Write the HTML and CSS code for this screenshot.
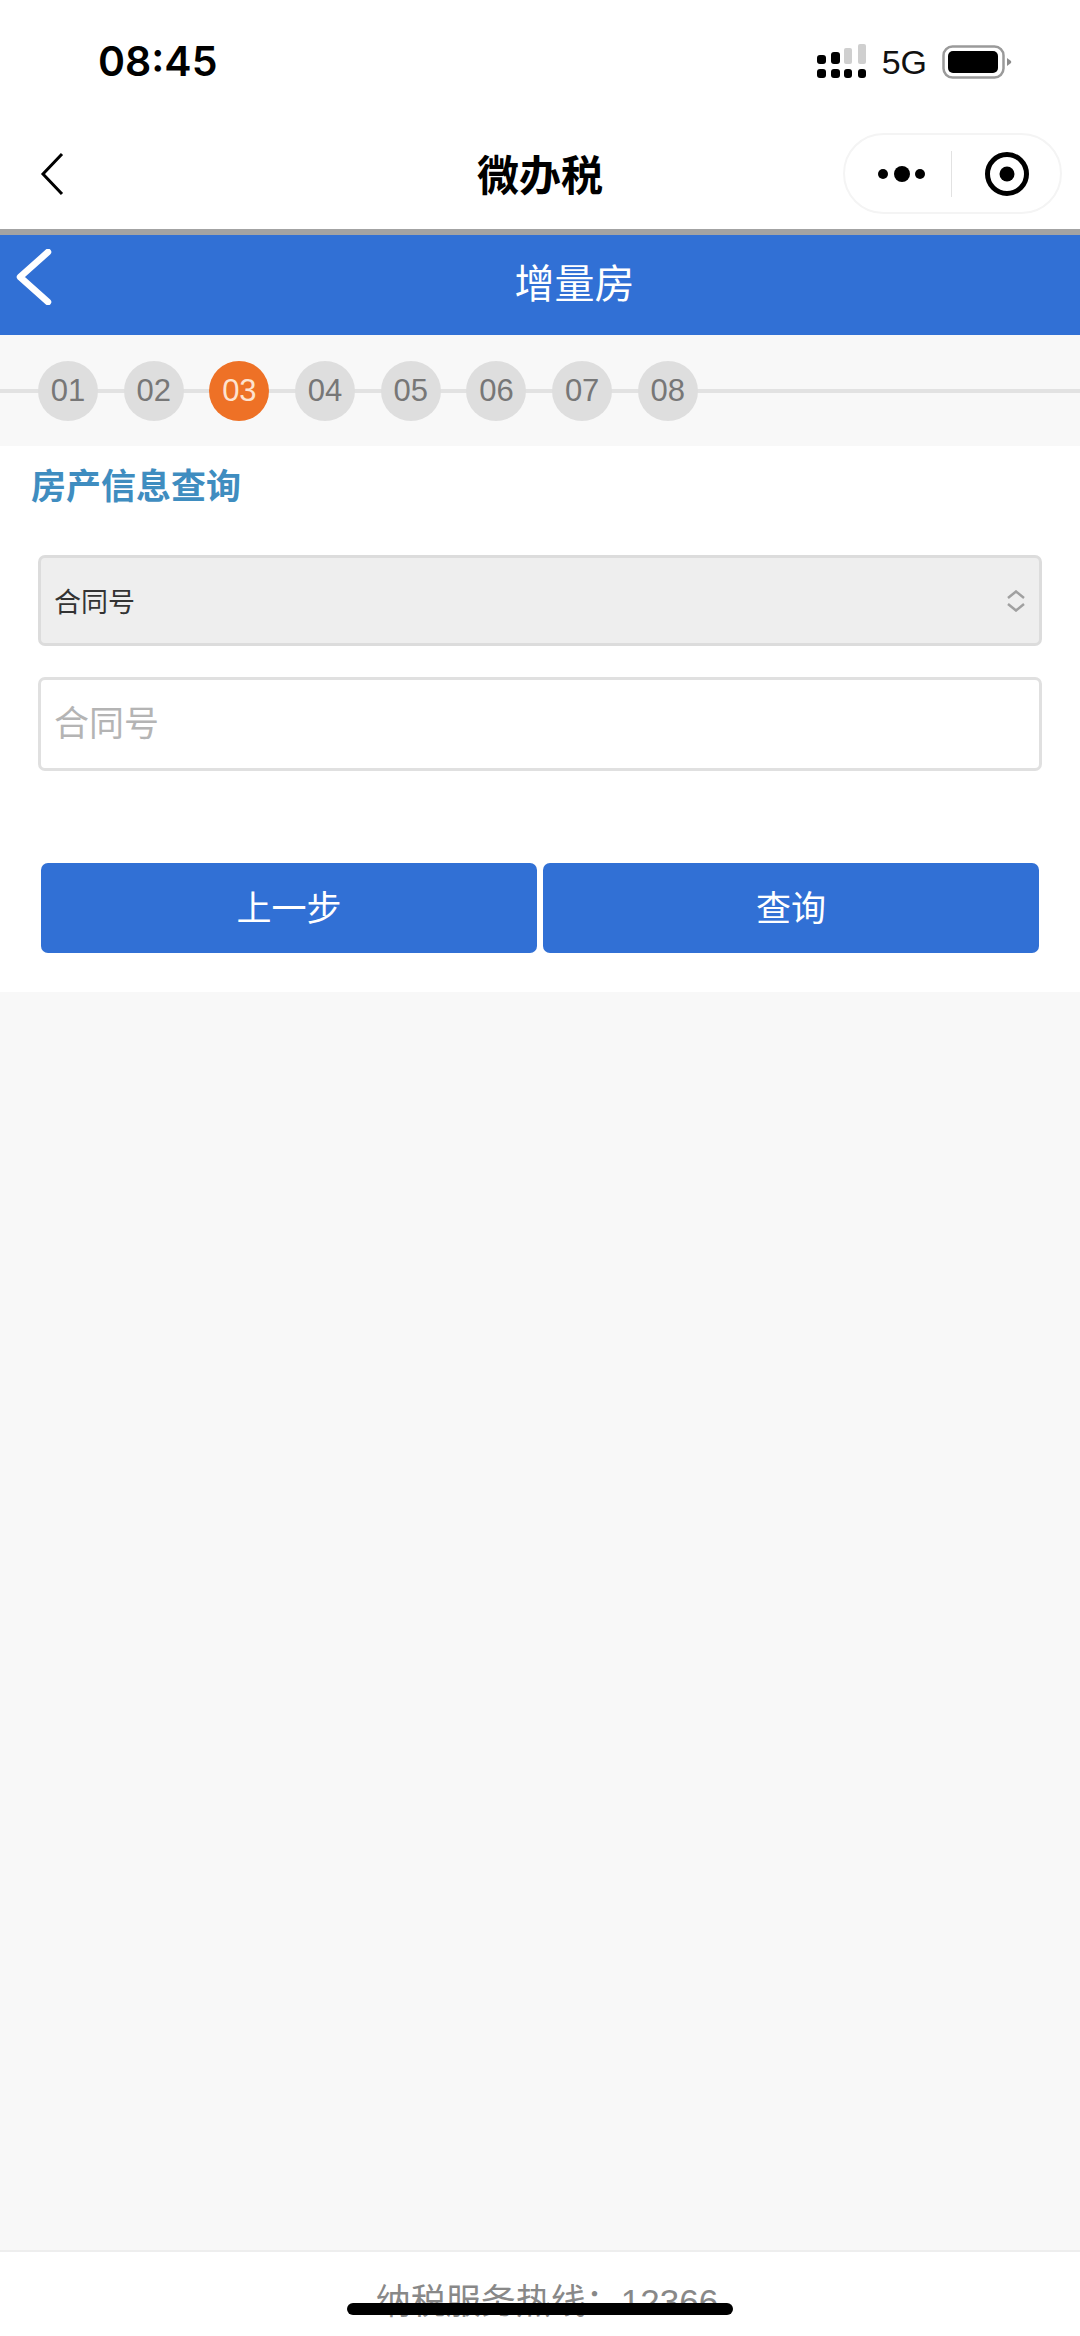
FILE: index.html
```html
<!DOCTYPE html>
<html lang="zh-CN">
<head>
    <meta charset="UTF-8">
    <meta name="viewport" content="width=device-width, initial-scale=1.0">
    <title>微办税</title>
    <link rel="stylesheet" href="styles.css">
</head>
<body>
    <div class="status-bar">
        <span class="time">08:45</span>
        <div class="status-icons">
            <svg class="signal" width="50" height="34" viewBox="0 0 50 34">
                <rect x="0" y="11" width="9" height="9" rx="3" fill="#000"/>
                <rect x="14" y="8" width="9" height="12" rx="3" fill="#000"/>
                <rect x="27" y="4" width="8" height="16" rx="2" fill="#cfcfcf"/>
                <rect x="41" y="0" width="8" height="20" rx="2" fill="#cfcfcf"/>
                <rect x="0" y="25" width="9" height="9" rx="3" fill="#000"/>
                <rect x="14" y="25" width="9" height="9" rx="3" fill="#000"/>
                <rect x="27" y="25" width="8" height="9" rx="3" fill="#000"/>
                <rect x="41" y="25" width="8" height="9" rx="3" fill="#000"/>
            </svg>
            <span class="network">5G</span>
            <svg class="battery" width="70" height="34" viewBox="0 0 70 34">
                <rect x="1.5" y="1.5" width="60" height="31" rx="9" fill="#fff" stroke="#9a9a9a" stroke-width="2.5"/>
                <rect x="6" y="6" width="50" height="22" rx="5" fill="#000"/>
                <path d="M65 13 L69 16 Q69.500 17 69 18 L65 21 Z" fill="#8c8c8c"/>
            </svg>
        </div>
    </div>

    <div class="wx-nav">
        <svg class="wx-back" width="24" height="44" viewBox="0 0 24 44">
            <path d="M22 2 L3 22 L22 42" fill="none" stroke="#000" stroke-width="3"/>
        </svg>
        <div class="wx-title">微办税</div>
        <div class="capsule">
            <svg class="capsule-more" width="50" height="20" viewBox="0 0 50 20">
                <circle cx="6" cy="10" r="5" fill="#000"/>
                <circle cx="25" cy="10" r="8" fill="#000"/>
                <circle cx="43" cy="10" r="5" fill="#000"/>
            </svg>
            <span class="capsule-line"></span>
            <svg class="capsule-target" width="46" height="46" viewBox="0 0 46 46">
                <circle cx="23" cy="23" r="19.500" fill="none" stroke="#000" stroke-width="5"/>
                <circle cx="23" cy="23" r="7.500" fill="#000"/>
            </svg>
        </div>
    </div>

    <div class="page-header">
        <svg class="page-back" width="42" height="56" viewBox="0 0 42 56">
            <path d="M35 3 L7 28 L35 53" fill="none" stroke="#fff" stroke-width="6.500" stroke-linecap="round" stroke-linejoin="round"/>
        </svg>
        <div class="page-title">增量房</div>
        <span></span>
    </div>

    <div class="steps">
        <div class="step">01</div>
        <div class="step">02</div>
        <div class="step active">03</div>
        <div class="step">04</div>
        <div class="step">05</div>
        <div class="step">06</div>
        <div class="step">07</div>
        <div class="step">08</div>
    </div>

    <div class="panel">
        <h2 class="panel-title">房产信息查询</h2>
        <div class="select-box">
            <span>合同号</span>
            <svg width="20" height="22" viewBox="0 0 20 22">
                <path d="M2 8 L10 1.500 L18 8 M2 14 L10 20.500 L18 14" fill="none" stroke="#a0a0a0" stroke-width="2.500"/>
            </svg>
        </div>
        <input class="text-box" type="text" placeholder="合同号">
        <div class="buttons">
            <button class="btn">上一步</button>
            <button class="btn">查询</button>
        </div>
    </div>

    <div class="spacer"></div>

    <div class="footer">纳税服务热线：12366</div>
    <div class="home-bar"></div>
</body>
</html>
```

FILE: styles.css
```css
* {
    margin: 0;
    padding: 0;
    box-sizing: border-box;
    font-family: "Liberation Sans", "Noto Sans CJK SC", sans-serif;
}
body {
    position: relative;
    display: flex;
    flex-direction: column;
    width: 1080px;
    height: 2336px;
    overflow: hidden;
    background: #fff;
}
.status-bar {
    display: flex;
    justify-content: space-between;
    align-items: flex-start;
    height: 133px;
    padding: 37px 68px 0 98px;
}
.time {
    font-family: Inter, sans-serif;
    font-size: 41px;
    font-weight: 600;
    line-height: 48px;
    color: #000;
}
.status-icons {
    display: flex;
    align-items: flex-start;
    padding-top: 7px;
}
.network {
    margin-left: 15px;
    font-size: 34px;
    line-height: 36px;
    color: #111;
}
.battery {
    margin-left: 15px;
    margin-top: 1px;
}
.wx-nav {
    display: grid;
    grid-template-columns: 1fr auto 1fr;
    align-items: center;
    height: 96px;
    padding: 0 18px 15px;
}
.wx-back {
    margin-left: 22px;
}
.wx-title {
    margin-top: -2px;
    font-size: 42px;
    font-weight: 700;
    color: #000;
}
.capsule {
    justify-self: end;
    display: flex;
    align-items: center;
    width: 219px;
    height: 81px;
    padding-left: 32px;
    border: 2px solid #f4f4f4;
    border-radius: 41px;
}
.capsule-line {
    width: 1px;
    height: 46px;
    margin-left: 24px;
    background: #e2e2e2;
}
.capsule-target {
    margin-left: 32px;
}
.page-header {
    display: grid;
    grid-template-columns: 1fr auto 1fr;
    align-items: center;
    height: 106px;
    padding: 0 0 0 13px;
    border-top: 6px solid #a3a3a3;
    background: #3170d5;
}
.page-back {
    margin-top: -16px;
}
.page-title {
    margin-top: -8px;
    padding-left: 56px;
    font-size: 40px;
    color: #fff;
}
.steps {
    display: flex;
    gap: 25.7px;
    height: 111px;
    padding: 26px 0 0 38px;
    background: #f8f8f8 linear-gradient(#e2e2e2, #e2e2e2) 0 54px / 100% 4px no-repeat;
}
.step {
    width: 60px;
    height: 60px;
    border-radius: 50%;
    background: #dedede;
    color: #777;
    font-size: 31px;
    line-height: 60px;
    text-align: center;
}
.step.active {
    background: #ee7126;
    color: #fde3d0;
}
.panel {
    height: 546px;
    padding: 18px 38px 0;
}
.panel-title {
    margin-left: -7px;
    font-size: 35px;
    font-weight: 700;
    line-height: 46px;
    color: #3f8dc0;
}
.select-box {
    display: flex;
    justify-content: space-between;
    align-items: center;
    height: 91px;
    margin-top: 45px;
    padding: 0 13px;
    background: #eee;
    border: 3px solid #dcdcdc;
    border-radius: 7px;
    font-size: 27px;
    color: #333;
}
.text-box {
    display: block;
    width: 100%;
    height: 94px;
    margin-top: 31px;
    padding: 0 13px;
    background: #fff;
    border: 3px solid #e0e0e0;
    border-radius: 7px;
    font-size: 35px;
    outline: none;
}
.text-box::placeholder {
    color: #b4b4b4;
}
.buttons {
    display: flex;
    gap: 6px;
    margin-top: 92px;
    padding: 0 3px;
}
.btn {
    flex: 1;
    height: 90px;
    padding-bottom: 5px;
    background: #3170d5;
    border: none;
    border-radius: 7px;
    color: #fff;
    font-size: 35px;
}
.spacer {
    flex: 1;
    background: #f8f8f8;
}
.footer {
    height: 86px;
    padding: 26px 0 0 14px;
    border-top: 2px solid #eee;
    color: #888;
    font-size: 35px;
    line-height: 48px;
    text-align: center;
}
.home-bar {
    position: absolute;
    left: 347px;
    top: 2303px;
    width: 386px;
    height: 12px;
    border-radius: 6px;
    background: #000;
}
```
